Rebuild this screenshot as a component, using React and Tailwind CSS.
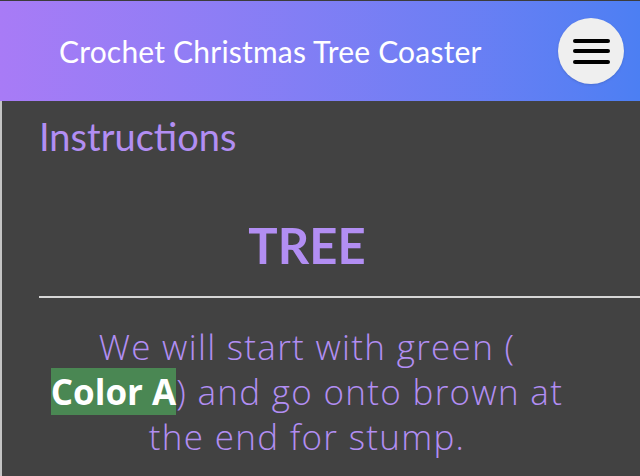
import React from 'react';

const App = () => {
  return (
    <div className="min-h-screen bg-[#424242] overflow-hidden" style={{ fontFamily: 'Lato, "Open Sans", sans-serif' }}>
      <header className="h-[101px] border-t border-[#3c3c3c] bg-gradient-to-r from-[#a87bf6] to-[#4c7ff3] flex items-center justify-between pl-[59px] pr-[16px]">
        <h1 className="text-[30px] text-white font-normal tracking-[0.2px]">Crochet Christmas Tree Coaster</h1>
        <button className="w-[66px] h-[66px] rounded-full bg-[#efefef] flex flex-col items-center justify-center gap-[6.5px] shadow-sm">
          <span className="block w-[37px] h-[4px] rounded-full bg-black" />
          <span className="block w-[37px] h-[4px] rounded-full bg-black" />
          <span className="block w-[37px] h-[4px] rounded-full bg-black" />
        </button>
      </header>

      <main className="border-l-2 border-[#c4c4c4] pl-[37px] pr-[65px] min-h-[375px]">
        <h2 className="text-[38px] leading-none text-[#b28ef3] pt-[16px]">Instructions</h2>

        <h3 className="text-center text-[49px] font-bold leading-none text-[#b28ef3] mt-[66px]">TREE</h3>

        <hr className="mt-[26px] w-[620px] border-0 border-t-2 border-[#d6d6d6]" />

        <p
          className="text-center text-[35px] font-light leading-[45px] text-[#b28ef3] mt-[26px] tracking-[1.3px]"
          style={{ fontFamily: '"Open Sans", Lato, sans-serif' }}
        >
          We will start with green ( <span className="bg-[#4a8753] text-white font-bold tracking-[0px] whitespace-nowrap">Color A</span>) and go onto brown at the end for stump.
        </p>
      </main>
    </div>
  );
};

export default App;
